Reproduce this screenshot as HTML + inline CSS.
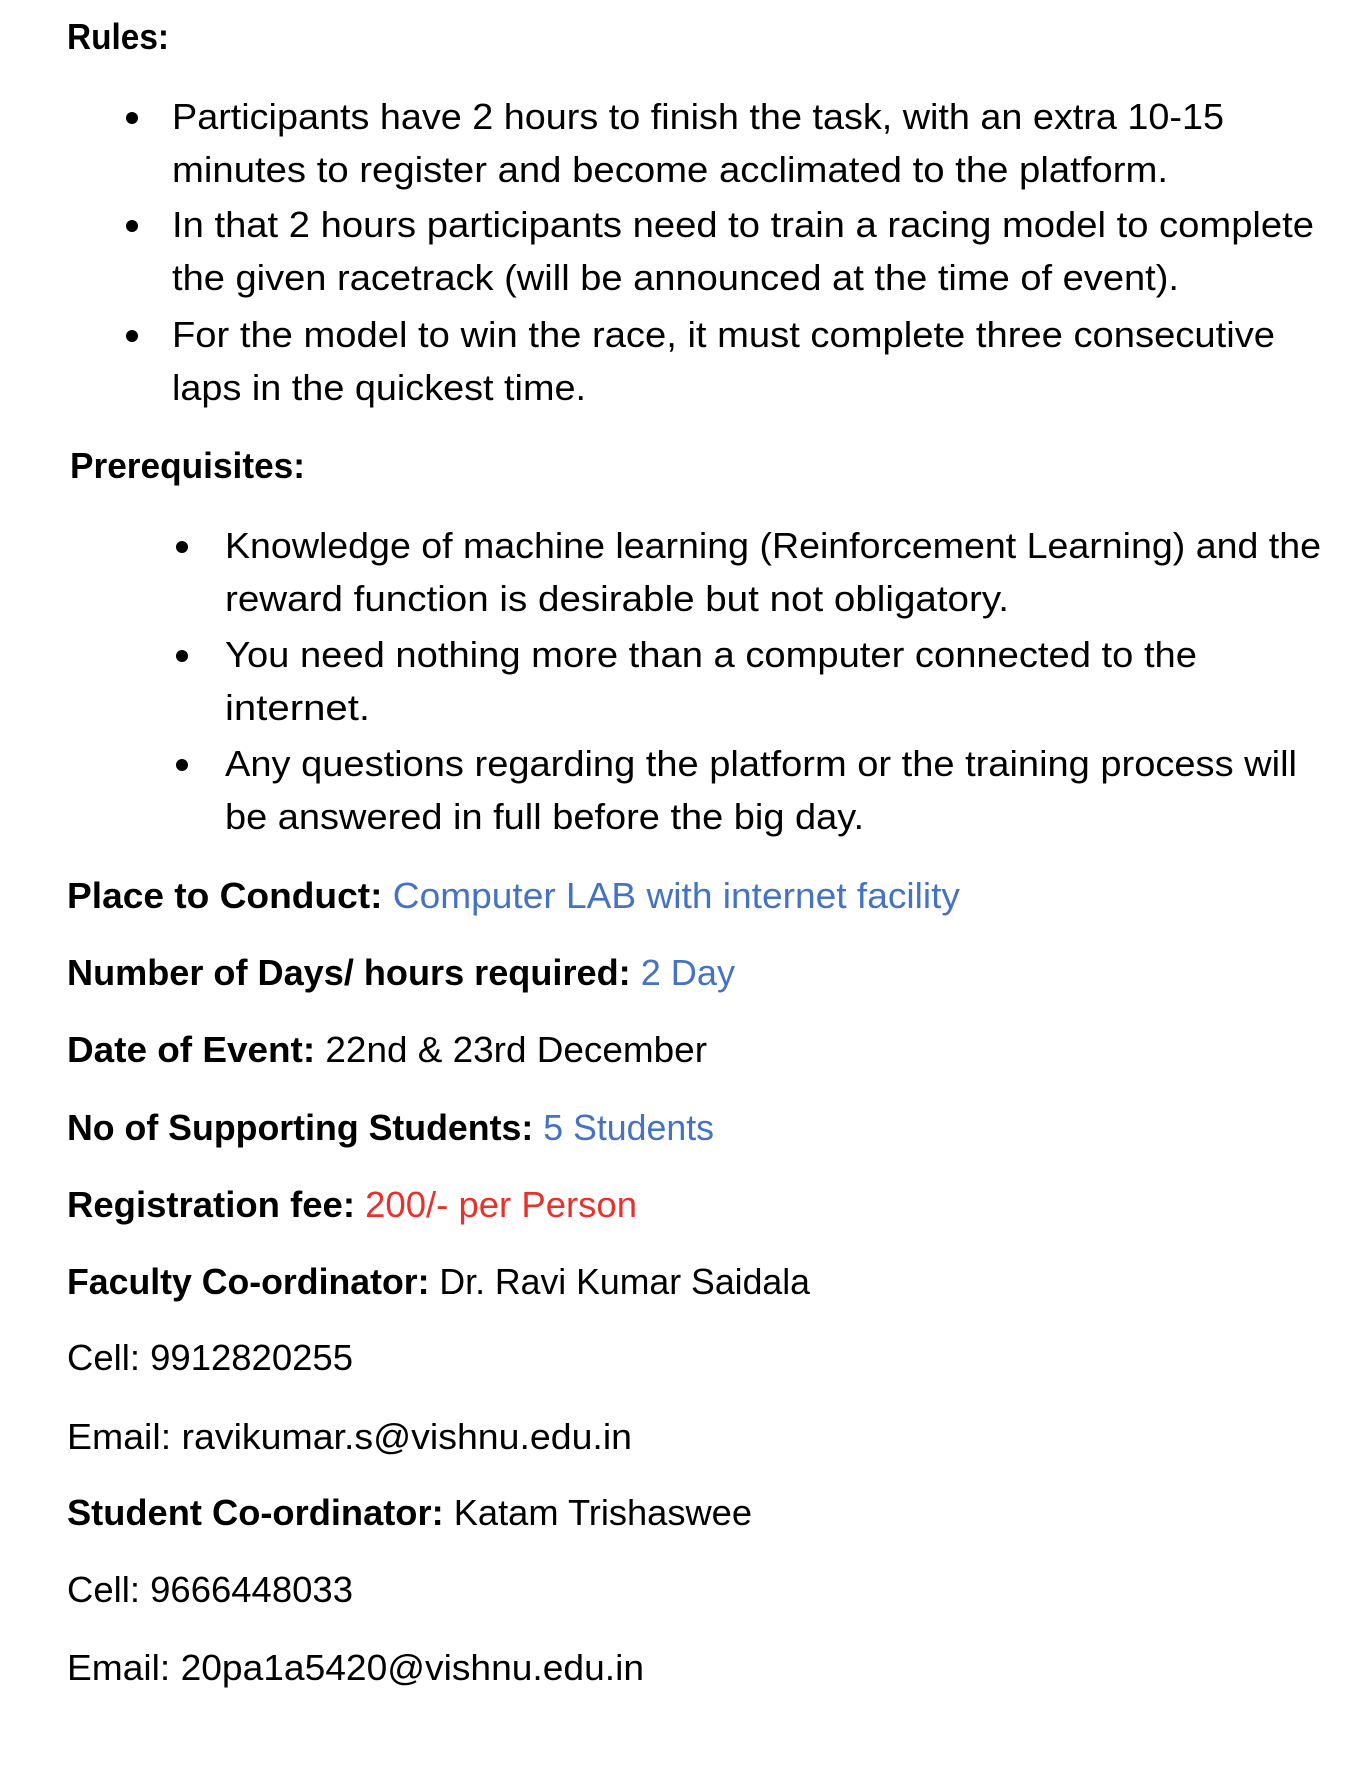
<!DOCTYPE html>
<html><head><meta charset="utf-8"><style>
html,body{margin:0;padding:0;background:#fff;width:1372px;height:1774px;overflow:hidden}
svg{display:block}
text{font-family:"Liberation Sans",sans-serif;font-size:36px;fill:#000}
.b{font-weight:bold}
.bl{fill:#4472c4}
.r{fill:#e8312a}
</style></head><body>
<svg width="1372" height="1774" viewBox="0 0 1372 1774">
<text x="67" y="49" class="b" textLength="102" lengthAdjust="spacingAndGlyphs">Rules:</text>
<circle cx="132" cy="118" r="6"/><circle cx="132" cy="226" r="6"/><circle cx="132" cy="336" r="6"/>
<text x="172" y="129" textLength="1052" lengthAdjust="spacingAndGlyphs">Participants have 2 hours to finish the task, with an extra 10-15</text>
<text x="172" y="182" textLength="996" lengthAdjust="spacingAndGlyphs">minutes to register and become acclimated to the platform.</text>
<text x="172" y="237" textLength="1142" lengthAdjust="spacingAndGlyphs">In that 2 hours participants need to train a racing model to complete</text>
<text x="172" y="290" textLength="1007" lengthAdjust="spacingAndGlyphs">the given racetrack (will be announced at the time of event).</text>
<text x="172" y="347" textLength="1103" lengthAdjust="spacingAndGlyphs">For the model to win the race, it must complete three consecutive</text>
<text x="172" y="400" textLength="414" lengthAdjust="spacingAndGlyphs">laps in the quickest time.</text>
<text x="70" y="478" class="b" textLength="235" lengthAdjust="spacingAndGlyphs">Prerequisites:</text>
<circle cx="182" cy="547" r="6"/><circle cx="182" cy="656" r="6"/><circle cx="182" cy="765" r="6"/>
<text x="225" y="558" textLength="1096" lengthAdjust="spacingAndGlyphs">Knowledge of machine learning (Reinforcement Learning) and the</text>
<text x="225" y="611" textLength="784" lengthAdjust="spacingAndGlyphs">reward function is desirable but not obligatory.</text>
<text x="225" y="667" textLength="972" lengthAdjust="spacingAndGlyphs">You need nothing more than a computer connected to the</text>
<text x="225" y="720" textLength="145" lengthAdjust="spacingAndGlyphs">internet.</text>
<text x="225" y="776" textLength="1072" lengthAdjust="spacingAndGlyphs">Any questions regarding the platform or the training process will</text>
<text x="225" y="829" textLength="639" lengthAdjust="spacingAndGlyphs">be answered in full before the big day.</text>
<text x="67" y="908" textLength="893" lengthAdjust="spacingAndGlyphs"><tspan class="b">Place to Conduct:</tspan> <tspan class="bl">Computer LAB with internet facility</tspan></text>
<text x="67" y="985" textLength="668" lengthAdjust="spacingAndGlyphs"><tspan class="b">Number of Days/ hours required:</tspan> <tspan class="bl">2 Day</tspan></text>
<text x="67" y="1062" textLength="640" lengthAdjust="spacingAndGlyphs"><tspan class="b">Date of Event:</tspan> 22nd &amp; 23rd December</text>
<text x="67" y="1140" textLength="647" lengthAdjust="spacingAndGlyphs"><tspan class="b">No of Supporting Students:</tspan> <tspan class="bl">5 Students</tspan></text>
<text x="67" y="1217" textLength="570" lengthAdjust="spacingAndGlyphs"><tspan class="b">Registration fee:</tspan> <tspan class="r">200/- per Person</tspan></text>
<text x="67" y="1294" textLength="743" lengthAdjust="spacingAndGlyphs"><tspan class="b">Faculty Co-ordinator:</tspan> Dr. Ravi Kumar Saidala</text>
<text x="67" y="1370" textLength="286" lengthAdjust="spacingAndGlyphs">Cell: 9912820255</text>
<text x="67" y="1449" textLength="565" lengthAdjust="spacingAndGlyphs">Email: ravikumar.s@vishnu.edu.in</text>
<text x="67" y="1525" textLength="685" lengthAdjust="spacingAndGlyphs"><tspan class="b">Student Co-ordinator:</tspan> Katam Trishaswee</text>
<text x="67" y="1602" textLength="286" lengthAdjust="spacingAndGlyphs">Cell: 9666448033</text>
<text x="67" y="1680" textLength="577" lengthAdjust="spacingAndGlyphs">Email: 20pa1a5420@vishnu.edu.in</text>
</svg>
</body></html>
